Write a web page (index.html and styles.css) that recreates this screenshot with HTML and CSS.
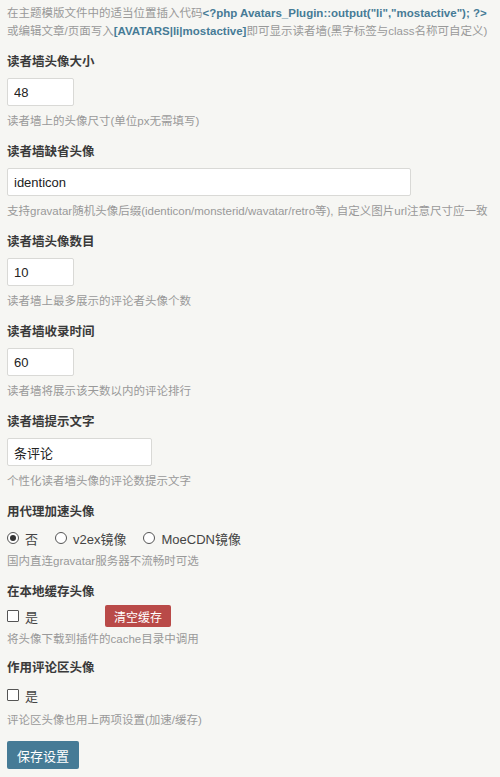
FILE: index.html
```html
<!DOCTYPE html>
<html lang="zh-CN">
<head>
<meta charset="utf-8">
<title>Avatars 设置</title>
<link rel="stylesheet" href="styles.css">
</head>
<body>
<div class="page">
  <p class="intro">在主题模版文件中的适当位置插入代码<strong class="code">&lt;?php Avatars_Plugin::output("li","mostactive"); ?&gt;</strong><br>或编辑文章/页面写入<strong class="code">[AVATARS|li|mostactive]</strong>即可显示读者墙(黑字标签与class名称可自定义)</p>

  <div class="field">
    <label class="label">读者墙头像大小</label>
    <input class="text w-mini" type="text" value="48">
    <p class="desc">读者墙上的头像尺寸(单位px无需填写)</p>
  </div>

  <div class="field">
    <label class="label">读者墙缺省头像</label>
    <input class="text w-large" type="text" value="identicon">
    <p class="desc">支持gravatar随机头像后缀(identicon/monsterid/wavatar/retro等), 自定义图片url注意尺寸应一致</p>
  </div>

  <div class="field">
    <label class="label">读者墙头像数目</label>
    <input class="text w-mini" type="text" value="10">
    <p class="desc">读者墙上最多展示的评论者头像个数</p>
  </div>

  <div class="field">
    <label class="label">读者墙收录时间</label>
    <input class="text w-mini" type="text" value="60">
    <p class="desc">读者墙将展示该天数以内的评论排行</p>
  </div>

  <div class="field">
    <label class="label">读者墙提示文字</label>
    <input class="text w-mid" type="text" value="条评论">
    <p class="desc">个性化读者墙头像的评论数提示文字</p>
  </div>

  <div class="field field-choice">
    <label class="label">用代理加速头像</label>
    <div class="choices">
      <span class="choice"><span class="radio checked"></span>否</span>
      <span class="choice"><span class="radio"></span>v2ex镜像</span>
      <span class="choice"><span class="radio"></span>MoeCDN镜像</span>
    </div>
    <p class="desc">国内直连gravatar服务器不流畅时可选</p>
  </div>

  <div class="field field-cache">
    <label class="label">在本地缓存头像</label>
    <div class="choices">
      <span class="choice"><span class="check"></span>是</span>
      <button class="btn btn-danger" type="button">清空缓存</button>
    </div>
    <p class="desc">将头像下载到插件的cache目录中调用</p>
  </div>

  <div class="field field-comment">
    <label class="label">作用评论区头像</label>
    <div class="choices">
      <span class="choice"><span class="check"></span>是</span>
    </div>
    <p class="desc">评论区头像也用上两项设置(加速/缓存)</p>
  </div>

  <button class="btn btn-primary" type="button">保存设置</button>
</div>
</body>
</html>
```

FILE: styles.css
```css
html, body {
  margin: 0;
  padding: 0;
  background: #f6f6f3;
}
body {
  font-family: "Liberation Sans", "Noto Sans CJK SC", sans-serif;
  color: #444;
  font-size: 13px;
}
.page {
  padding: 4px 7px 0;
}
p { margin: 0; }
.intro {
  font-size: 11.5px;
  line-height: 18px;
  color: #999;
  white-space: nowrap;
}
.code {
  color: #467b96;
  font-weight: bold;
}
.field {
  display: flex;
  flex-direction: column;
  align-items: flex-start;
  margin-top: 13px;
}
.label {
  display: block;
  font-size: 12.5px;
  line-height: 18px;
  font-weight: bold;
  color: #3a3a3a;
}
.text {
  box-sizing: border-box;
  height: 28px;
  margin: 7px 0 0;
  padding: 0 6px;
  border: 1px solid #d9d9d6;
  border-radius: 2px;
  background: #fff;
  font-family: "Liberation Sans", "Noto Sans CJK SC", sans-serif;
  font-size: 13px;
  color: #222;
  outline: none;
}
.w-mini { width: 67px; }
.w-mid { width: 145px; }
.w-large { width: 404px; }
.desc {
  margin-top: 6px;
  font-size: 11.5px;
  line-height: 18px;
  color: #999;
  white-space: nowrap;
}
.choices {
  display: flex;
  align-items: center;
  height: 20px;
  margin-top: 7px;
  font-size: 13px;
  color: #444;
}
.field-choice .desc { margin-top: 4px; }
.choice {
  display: inline-flex;
  align-items: center;
  margin-right: 17px;
}
.radio {
  box-sizing: border-box;
  width: 12px;
  height: 12px;
  border: 1px solid #555;
  border-radius: 50%;
  margin-right: 6px;
  display: inline-flex;
  align-items: center;
  justify-content: center;
  background: #fff;
}
.radio.checked::after {
  content: "";
  width: 6px;
  height: 6px;
  border-radius: 50%;
  background: #333;
}
.check {
  box-sizing: border-box;
  width: 12px;
  height: 12px;
  border: 1px solid #555;
  border-radius: 1px;
  margin-right: 6px;
  background: #fff;
}
.field-cache .choices {
  height: 22px;
  margin-top: 4px;
}
.field-cache .choice { margin-right: 67px; }
.field-cache .desc { margin-top: 3px; }
.field-comment { margin-top: 11px; }
.field-comment .choices { margin-top: 8px; }
.btn {
  border: none;
  border-radius: 2px;
  color: #fff;
  font-family: "Liberation Sans", "Noto Sans CJK SC", sans-serif;
  cursor: pointer;
}
.btn-danger {
  height: 22px;
  padding: 0 9px;
  font-size: 12px;
  background: #b94a48;
}
.btn-primary {
  display: block;
  margin-top: 12px;
  height: 28px;
  padding: 0 10px;
  font-size: 13px;
  background: #467b96;
}
```
